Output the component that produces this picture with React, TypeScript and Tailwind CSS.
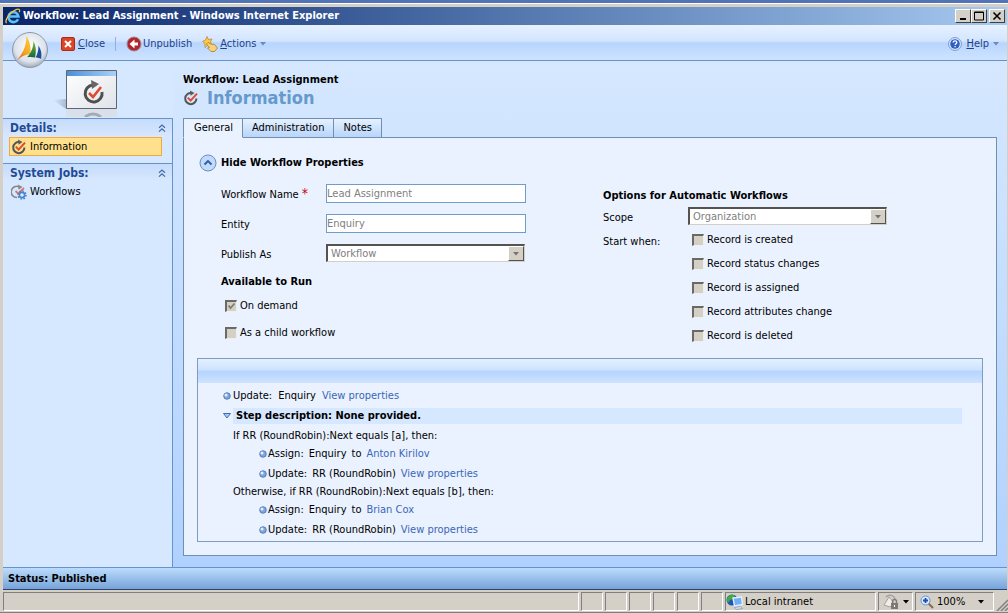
import { useState } from "react";

const startOptions = ["Record is created", "Record status changes", "Record is assigned", "Record attributes change", "Record is deleted"];

const branches = [
  { condition: "If RR (RoundRobin):Next equals [a], then:", owner: "Anton Kirilov" },
  { condition: "Otherwise, if RR (RoundRobin):Next equals [b], then:", owner: "Brian Cox" },
];

type IconProps = { className?: string };

const WorkflowIcon = ({ className = "w-4 h-4" }: IconProps) => (
  <svg viewBox="0 0 16 16" fill="none" className={className}>
    <path d="M8.500 3A5.600 5.600 0 1 0 13.400 8.500" stroke="#565656" strokeWidth="2" />
    <path d="M7 0.500l4.500 2.600L7.600 5.800z" fill="#5a5a5a" />
    <path d="M4.800 7.600l2.800 3L14 3.600" stroke="#e0492e" strokeWidth="2" />
  </svg>
);

const IeIcon = () => (
  <svg viewBox="0 0 16 16" fill="none" className="w-4 h-4">
    <path d="M13 11.200A5 5 0 1 1 13.400 8.500H4.500" stroke="#5cc1f3" strokeWidth="2.600" />
    <path d="M1.600 15C-1 12.500 5 4 11 1.600c3-1.200 4.400 0 3.200 2.600" stroke="#f0c33c" strokeWidth="1.300" />
  </svg>
);

const CrmLogo = () => (
  <svg viewBox="0 0 38 38" className="w-[38px] h-[38px]">
    <defs>
      <radialGradient id="orb" cx="50%" cy="40%" r="62%">
        <stop offset="0" stopColor="#ffffff" />
        <stop offset=".7" stopColor="#dde3ec" />
        <stop offset="1" stopColor="#98a3b3" />
      </radialGradient>
      <linearGradient id="sail" x1="1" y1="0" x2="0" y2="1">
        <stop offset="0" stopColor="#f9d43a" />
        <stop offset=".55" stopColor="#f3a422" />
        <stop offset="1" stopColor="#e0421a" />
      </linearGradient>
      <linearGradient id="greenSail" x1="0" y1="0" x2="0" y2="1">
        <stop offset="0" stopColor="#7fb93a" />
        <stop offset="1" stopColor="#14693c" />
      </linearGradient>
    </defs>
    <circle cx="19" cy="19" r="17.500" fill="url(#orb)" stroke="#8d99a8" />
    <path d="M15.500 5c3.500 6 5 12 3.500 18.500-4 0-8.500 1.500-13 6C11 23 15.500 16 15.500 5z" fill="url(#sail)" />
    <path d="M22.500 10c2.500 4.500 3 10.500 1.500 16.500-2.500-.6-5-.8-8-.3 4-4 6.500-9.500 6.500-16.200z" fill="url(#greenSail)" />
    <path d="M27.500 14.500c3 4.500 3.500 9 2.500 13.500-1.600-1-3.500-1.500-5.500-1.500 2-3.200 3-7.200 3-12z" fill="#1f4f9c" />
  </svg>
);

const WindowPicture = () => (
  <svg viewBox="0 0 64 48" className="w-16 h-12">
    <defs>
      <linearGradient id="winbar" x1="0" y1="0" x2="1" y2="0">
        <stop offset="0" stopColor="#4d8fd8" />
        <stop offset="1" stopColor="#a9d0f5" />
      </linearGradient>
      <linearGradient id="winbody" x1="0" y1="0" x2="1" y2="1">
        <stop offset="0" stopColor="#ffffff" />
        <stop offset="1" stopColor="#dfe3e8" />
      </linearGradient>
      <linearGradient id="winshade" x1="0" y1="0" x2="1" y2="0">
        <stop offset="0" stopColor="#d6e8ff" />
        <stop offset="1" stopColor="#a9bbd6" />
      </linearGradient>
    </defs>
    <path d="M0 31l13-1v10z" fill="url(#winshade)" />
    <path d="M13 40h51v8H13z" fill="#d9e0e9" />
    <path d="M32 48q8-6 16 0" stroke="#a3abb6" strokeWidth="3" fill="none" />
    <path d="M13.500 1.500h50v38h-50z" fill="url(#winbody)" stroke="#5c6773" />
    <path d="M14 2h49v5H14z" fill="url(#winbar)" />
    <path d="M40 16A8.500 8.500 0 1 0 49 23" stroke="#505050" strokeWidth="3" fill="none" />
    <path d="M38 11l8 4-7 5z" fill="#666" />
    <path d="M36 24l4 4 8-10" stroke="#e0492e" strokeWidth="2.600" fill="none" />
  </svg>
);

const CloseIcon = () => (
  <svg viewBox="0 0 16 16" className="w-4 h-4">
    <rect x="1.500" y="1.500" width="13" height="13" rx="1.500" fill="#dc4526" stroke="#a92b16" />
    <path d="M5 5l6 6M11 5l-6 6" stroke="#fff" strokeWidth="2" />
  </svg>
);

const UnpublishIcon = () => (
  <svg viewBox="0 0 16 16" className="w-4 h-4">
    <circle cx="8" cy="8" r="7" fill="#b3242c" stroke="#9a8a90" />
    <path d="M8.500 3.500v3H12v3H8.500v3L3.500 8z" fill="#fff" />
  </svg>
);

const ActionsIcon = () => (
  <svg viewBox="0 0 16 16" className="w-4 h-4">
    <path d="M5 .5l1.500 3L10 3 8.500 6l1.500 3.500-4-.5-3 2.500V7.500L.5 5.500 3.500 4z" fill="#fbc94a" stroke="#b98425" strokeWidth=".7" />
    <path d="M6 6.500l4 2 2-.5 3.500 4-3 3.500H9L5.500 12l2-.5L4.500 8z" fill="#f6d27c" stroke="#a87b28" strokeWidth=".8" />
  </svg>
);

const HelpIcon = () => (
  <svg viewBox="0 0 14 14" className="w-3.5 h-3.5">
    <circle cx="7" cy="7" r="6.400" fill="#e4effc" stroke="#7397cf" />
    <circle cx="7" cy="7" r="4.800" fill="#2d5fc4" />
    <path d="M5.200 5.600c0-2.400 3.600-2.200 3.600-.2 0 1.300-1.700 1.300-1.700 2.700M7.100 9v1.300" stroke="#fff" strokeWidth="1.300" fill="none" />
  </svg>
);

const WorkflowsIcon = () => (
  <svg viewBox="0 0 16 16" fill="none" className="w-4 h-4">
    <path d="M8.500 3A5.600 5.600 0 1 0 6 13.500" stroke="#888" strokeWidth="1.600" />
    <path d="M7 .5l4.500 2.600-3.900 2.700z" fill="#888" />
    <path d="M4.600 7l2.600 2.600L13 4" stroke="#e8705a" strokeWidth="1.800" />
    <circle cx="11" cy="11" r="2.600" fill="#dcebff" stroke="#4a83cc" strokeWidth="1.600" />
    <circle cx="11" cy="11" r="4" stroke="#4a83cc" strokeWidth="1.500" strokeDasharray="1.600 1.500" />
  </svg>
);

const IntranetIcon = () => (
  <svg viewBox="0 0 18 16" className="w-[18px] h-4">
    <circle cx="6" cy="6" r="5.500" fill="#2456b8" />
    <path d="M2 3c2-2.500 5-3 7-1L7 5 4 6 2 9C.5 7 .5 5 2 3z" fill="#3fae3c" />
    <path d="M7 4l8.500-1 1 7.500L8.500 12z" fill="#6fb0f7" stroke="#e4edf8" strokeWidth="1.400" />
    <path d="M8.500 13.500l6-1 2 2-6.500 1z" fill="#d8e3f2" stroke="#6d86ad" strokeWidth=".6" />
  </svg>
);

const PrivacyIcon = () => (
  <svg viewBox="0 0 16 16" fill="none" className="w-4 h-4">
    <path d="M1 11l5-8 5 6-4 4z" fill="#efeeea" stroke="#a5a29b" />
    <path d="M3 3c3-3 8-2 9 2" stroke="#a5a29b" strokeWidth="1.400" />
    <path d="M8 9h7v6H8z" fill="#7d7a74" />
    <path d="M9.500 9V7.500a2 2 0 0 1 4 0V9" stroke="#7d7a74" strokeWidth="1.400" />
    <path d="M11 11h1v2h-1z" fill="#fff" />
  </svg>
);

const ZoomIcon = () => (
  <svg viewBox="0 0 14 14" fill="none" className="w-3.5 h-3.5">
    <path d="M8.500 8.500L13 13" stroke="#8a6a4a" strokeWidth="2" />
    <circle cx="5.500" cy="5.500" r="4.500" fill="#dcecff" stroke="#5d93d8" />
    <path d="M5.500 3v5M3 5.500h5" stroke="#1c4fae" strokeWidth="1.800" />
  </svg>
);

const Chevrons = () => (
  <svg viewBox="0 0 8 8" className="w-2 h-2" fill="none" stroke="#3e6cae" strokeWidth="1.200">
    <path d="M1 3.800L4 1l3 2.800M1 7.600l3-2.800 3 2.800" />
  </svg>
);

const Arrow = ({ className = "" }: IconProps) => (
  <svg viewBox="0 0 6 4" className={`w-1.5 h-1 ${className}`}>
    <path d="M0 0h6L3 3.500z" fill="currentColor" />
  </svg>
);

const Bullet = () => (
  <svg viewBox="0 0 8 8" className="w-2 h-2 -mr-1 shrink-0">
    <circle cx="4" cy="4" r="3.300" fill="#7ea6de" stroke="#4470b3" strokeWidth=".8" />
    <circle cx="3" cy="3" r="1.500" fill="#e3effd" />
  </svg>
);

const Check = ({ id, label, checked = false }: { id: string; label: string; checked?: boolean }) => (
  <div className="flex items-center gap-[3px] h-6">
    <span className="relative flex">
      <input
        id={id}
        type="checkbox"
        defaultChecked={checked}
        disabled
        className="appearance-none w-3 h-3 bg-[#d4d0c8] border-t-2 border-l-2 border-t-[#6b6963] border-l-[#6b6963] border-b border-r border-b-[#f0efec] border-r-[#f0efec]"
      />
      {checked && (
        <svg viewBox="0 0 12 12" className="absolute inset-0 w-3 h-3" fill="none">
          <path d="M3.500 5.500L5.500 8l4-4.500" stroke="#807c74" strokeWidth="1.800" />
        </svg>
      )}
    </span>
    <label htmlFor={id}>{label}</label>
  </div>
);

const SelectBox = ({ id, value }: { id: string; value: string }) => (
  <div className="relative w-[199px]">
    <select
      id={id}
      disabled
      className="appearance-none block w-full h-[18px] pl-[3px] bg-white text-[#808080] opacity-100 border-t-2 border-l-2 border-t-[#55534f] border-l-[#55534f] border-b border-r border-b-[#d4d0c8] border-r-[#d4d0c8]"
    >
      <option>{value}</option>
    </select>
    <span className="absolute right-px top-0.5 bottom-px w-4 flex items-center justify-center bg-[#d4d0c8] border border-t-white border-l-white border-b-[#55534f] border-r-[#55534f] text-[#77736b] pointer-events-none">
      <Arrow />
    </span>
  </div>
);

const TextField = ({ id, value }: { id: string; value: string }) => (
  <input
    id={id}
    type="text"
    defaultValue={value}
    disabled
    className="w-[200px] h-[19px] pr-px bg-white border border-[#6f9dcb] text-[#808080]"
  />
);

const StepLink = ({ children }: { children: string }) => (
  <a href="#" className="text-[#3b66b8]">
    {children}
  </a>
);

const SideGroup = ({ title, children }: { title: string; children: React.ReactNode }) => (
  <section className="border-t border-[#6593cf] h-[45px]">
    <h2 className="flex items-center justify-between h-[18px] pl-[7px] pr-1.5 text-xs font-bold text-[#1f4a94] bg-linear-to-b from-[#c5dcfb] to-[#d8e8fd]">
      {title}
      <Chevrons />
    </h2>
    {children}
  </section>
);

const winButton =
  "w-4 h-[14px] flex items-center justify-center bg-[#d4d0c8] border border-t-white border-l-white border-b-[#404040] border-r-[#404040]";
const pane = "flex items-center border border-t-[#808080] border-l-[#808080] border-b-white border-r-white";

const App = () => {
  const [tab, setTab] = useState("General");

  return (
    <div className="min-h-screen flex flex-col bg-[#d4d0c8] border-t-3 border-[#5273b5] font-['DejaVu_Sans_Condensed','DejaVu_Sans',sans-serif] text-[11px] leading-4 text-black">
      <div className="flex-1 flex flex-col border-t border-white pt-[3px] pl-[3px] pr-px">
        {/* Title bar */}
        <header className="flex items-center h-[18px] px-0.5 bg-linear-to-r from-[#0a246a] to-[#a6caf0] text-white">
          <IeIcon />
          <h1 className="ml-0.5 font-bold flex-1">Workflow: Lead Assignment - Windows Internet Explorer</h1>
          <button aria-label="Minimize" className={winButton}>
            <svg viewBox="0 0 10 10" className="w-2.5 h-2.5"><path d="M2 7h6v2H2z" /></svg>
          </button>
          <button aria-label="Maximize" className={winButton}>
            <svg viewBox="0 0 10 10" className="w-2.5 h-2.5"><path d="M.5 1v8h9V1zM0 1.500h10" fill="none" stroke="#000" /></svg>
          </button>
          <button aria-label="Close window" className={`ml-0.5 ${winButton}`}>
            <svg viewBox="0 0 10 10" className="w-2.5 h-2.5"><path d="M1.500 1.500l7 7M8.500 1.500l-7 7" stroke="#000" strokeWidth="1.600" /></svg>
          </button>
        </header>

        {/* Toolbar */}
        <nav className="relative flex items-center h-9 pt-0.5 pl-[57px] pr-2 border-b border-[#6593cf] bg-[linear-gradient(#e6f1ff_0%,#d3e5ff_45%,#b7d5ff_52%,#cfe3ff_100%)] text-[#1f3f87]">
          <div className="absolute left-2 top-1.5">
            <CrmLogo />
          </div>
          <button className="flex items-center gap-0.5"><CloseIcon /><span><u>C</u>lose</span></button>
          <span className="mx-2.5 w-px h-3.5 bg-[#8fb2e0]" />
          <button className="flex items-center gap-px"><UnpublishIcon />Unpublish</button>
          <button className="ml-2.5 flex items-center gap-0.5"><ActionsIcon /><span><u>A</u>ctions</span><Arrow className="ml-0.5 text-[#6c8ab8]" /></button>
          <button className="ml-auto flex items-center gap-1"><HelpIcon /><span><u>H</u>elp</span><Arrow className="text-[#6c8ab8]" /></button>
        </nav>

        <div className="flex-1 flex bg-linear-to-b from-[#d6e8ff] to-[#b0d1ff]">
          {/* Left navigation */}
          <aside className="w-[170px] flex flex-col shrink-0 bg-[#d6e8ff]">
            <div className="h-[57px] pl-[50px] pt-2 overflow-hidden"><WindowPicture /></div>
            <div className="flex-1 border-r border-[#6593cf]">
              <SideGroup title="Details:">
                <a href="#" className="flex items-center gap-[3px] h-[19px] ml-1.5 mr-2.5 px-px bg-[#ffe08c] border border-[#f5a83c]">
                  <WorkflowIcon />Information
                </a>
              </SideGroup>
              <SideGroup title="System Jobs:">
                <a href="#" className="flex items-center gap-[3px] h-5 ml-2"><WorkflowsIcon />Workflows</a>
              </SideGroup>
            </div>
          </aside>

          <main className="flex-1 flex flex-col px-2.5 pb-[11px]">
            <div className="h-[57px] pt-[11px]">
              <p className="font-bold">Workflow: Lead Assignment</p>
              <h2 className="flex items-center gap-2 text-lg leading-5 font-bold text-[#6699cc]"><WorkflowIcon />Information</h2>
            </div>

            <div className="relative z-10 flex h-5 -mb-px">
              {["General", "Administration", "Notes"].map((name) => (
                <button
                  key={name}
                  onClick={() => setTab(name)}
                  className={`px-[9px] border border-l-0 first:border-l first:pl-2.5 border-[#6f8fb5] ${
                    tab === name ? "bg-[#eaf2ff] border-b-[#eaf2ff]" : "bg-linear-to-b from-[#e6f1ff] to-[#b8d5fa]"
                  }`}
                >
                  {name}
                </button>
              ))}
            </div>

            <div className="flex-1 flex flex-col bg-[#eaf2ff] border border-[#6f8fb5] px-[13px] pt-4 pb-[13px]">
              <button className="flex items-center gap-1 h-[18px] font-bold self-start ml-0.5">
                <svg viewBox="0 0 18 18" className="w-[18px] h-[18px]">
                  <circle cx="9" cy="9" r="8" fill="#c3dbfa" stroke="#6790c5" />
                  <path d="M5.500 10.500L9 7l3.500 3.500" stroke="#2e5ca8" strokeWidth="1.800" fill="none" />
                </svg>
                Hide Workflow Properties
              </button>

              <form className="flex pl-6 pt-1.5 pb-2.5">
                <div className="w-[382px]">
                  <div className="flex items-center h-[30px]">
                    <label htmlFor="name" className="w-[105px] pt-1">Workflow Name <span className="text-sm leading-3 text-[#c00]">*</span></label>
                    <TextField id="name" value="Lead Assignment" />
                  </div>
                  <div className="flex items-center h-[30px]">
                    <label htmlFor="entity" className="w-[105px] pt-1">Entity</label>
                    <TextField id="entity" value="Enquiry" />
                  </div>
                  <div className="flex items-center h-[30px]">
                    <label htmlFor="publish" className="w-[105px] pt-1">Publish As</label>
                    <SelectBox id="publish" value="Workflow" />
                  </div>
                  <h3 className="font-bold mt-1.5 mb-1">Available to Run</h3>
                  <div className="pl-1 flex flex-col gap-[3px]">
                    <Check id="demand" label="On demand" checked />
                    <Check id="child" label="As a child workflow" />
                  </div>
                </div>
                <div className="pt-2.5">
                  <h3 className="font-bold">Options for Automatic Workflows</h3>
                  <div className="flex items-center h-6">
                    <label htmlFor="scope" className="w-[85px] pt-1">Scope</label>
                    <SelectBox id="scope" value="Organization" />
                  </div>
                  <div className="flex">
                    <span className="w-[89px] pt-1.5">Start when:</span>
                    <div>
                      {startOptions.map((label, i) => (
                        <Check key={label} id={`start-${i}`} label={label} />
                      ))}
                    </div>
                  </div>
                </div>
              </form>

              <section className="flex-1 border border-[#7c9cc4]">
                <div className="h-6 bg-[linear-gradient(#e3f0ff_0%,#cfe3ff_45%,#b5d4ff_52%,#cfe3ff_100%)]" />
                <div className="pl-[25px] pr-5 pt-[3px]">
                  <p className="flex items-center gap-1.5 h-5">
                    <Bullet /><span>Update:</span><span>Enquiry</span><StepLink>View properties</StepLink>
                  </p>
                  <div className="flex items-center h-5 mb-0.5">
                    <svg viewBox="0 0 8 6" className="w-2 h-1.5"><path d="M.5 .5h7L4 5z" fill="#a9c9f5" stroke="#3e6cae" /></svg>
                    <h3 className="flex-1 bg-[#d6e8ff] ml-0.5 pl-[3px] font-bold">Step description: None provided.</h3>
                  </div>
                  {branches.map(({ condition, owner }) => (
                    <div key={owner} className="pl-2.5">
                      <p>{condition}</p>
                      <div className="pl-[26px]">
                        <p className="flex items-center gap-[5px] h-5">
                          <Bullet /><span>Assign:</span><span>Enquiry</span><span>to</span><StepLink>{owner}</StepLink>
                        </p>
                        <p className="flex items-center gap-[5px] h-5">
                          <Bullet /><span>Update:</span><span>RR (RoundRobin)</span><StepLink>View properties</StepLink>
                        </p>
                      </div>
                    </div>
                  ))}
                </div>
              </section>
            </div>
          </main>
        </div>

        <div className="h-[23px] px-[5px] flex items-center font-bold border-t border-b border-t-[#6593cf] border-b-[#30456b] bg-linear-to-b from-[#bddcfc] to-[#76a3d8]">
          Status: Published
        </div>
      </div>

      {/* Browser status bar */}
      <footer className="flex gap-0.5 h-[23px] pt-0.5 pl-[3px] pb-px border-b border-[#808080]">
        <div className={`flex-1 ${pane}`} />
        {[1, 2, 3, 4, 5, 6].map((n) => (
          <div key={n} className={`w-[22px] ${pane}`} />
        ))}
        <div className={`w-[151px] gap-px ${pane}`}><IntranetIcon />Local intranet</div>
        <button aria-label="Privacy" className={`w-[35px] gap-1 pl-1 ${pane}`}><PrivacyIcon /><Arrow /></button>
        <button className={`w-[79px] gap-[3px] pl-1 ${pane}`}><ZoomIcon />100%<Arrow className="ml-2.5" /></button>
        <svg viewBox="0 0 12 12" className="w-3 h-3 self-end" stroke="#808080" strokeWidth="1.500">
          <path d="M1 12L12 1M5 12l7-7M9 12l3-3" />
        </svg>
      </footer>
    </div>
  );
};

export default App;
